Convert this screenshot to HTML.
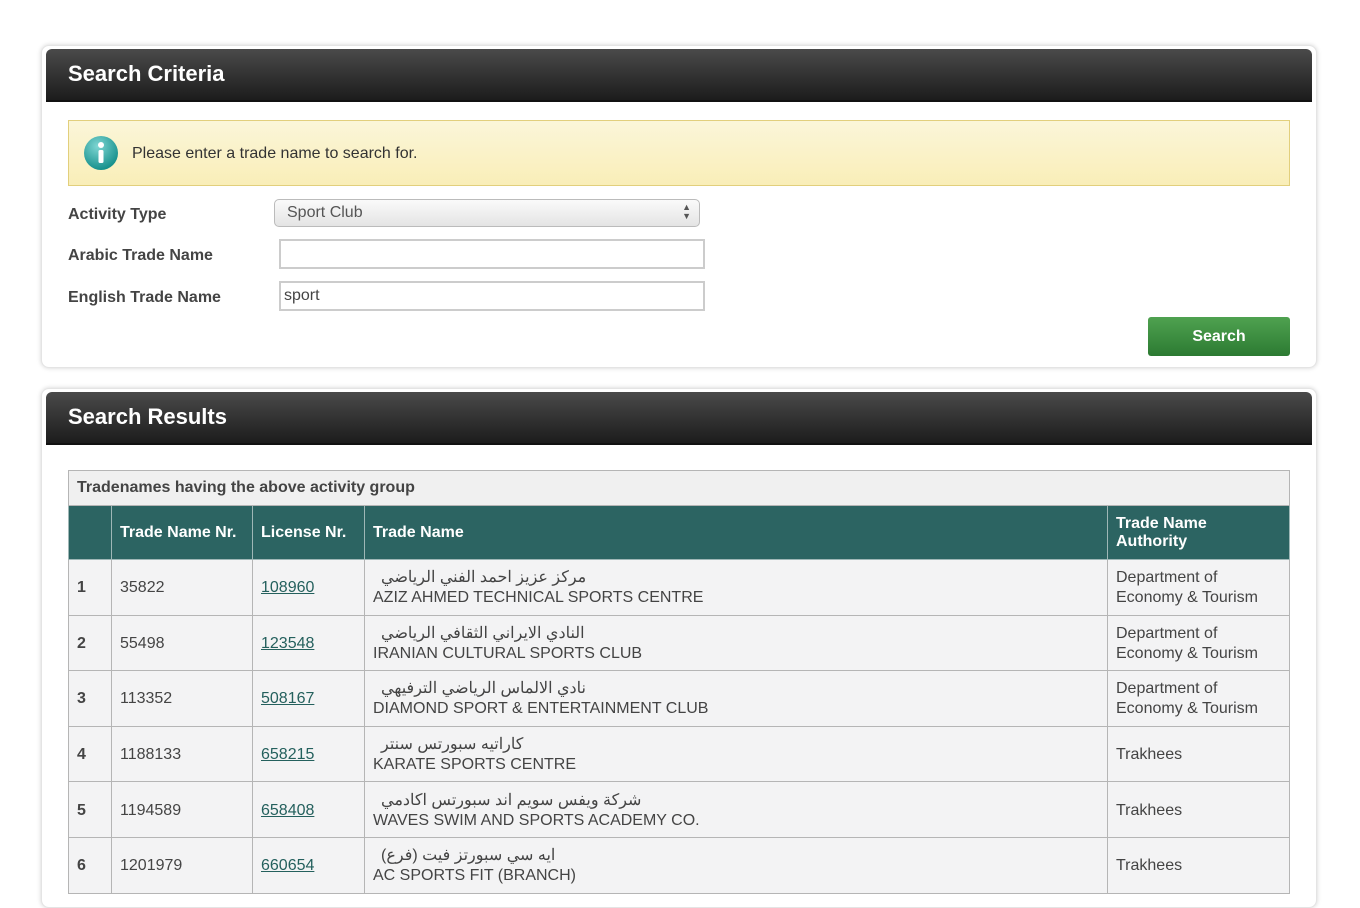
<!DOCTYPE html>
<html><head><meta charset="utf-8"><style>
body{margin:0;background:#fff;font-family:"Liberation Sans",Arial,"Noto Sans CJK SC",sans-serif;width:1360px;height:891px;overflow:hidden;position:relative}
.panel{position:absolute;left:41px;width:1276px;background:#fff;border-radius:8px;box-shadow:0 0 5px rgba(0,0,0,.18);border:1px solid #e4e4e4;box-sizing:border-box}
.hdr{position:absolute;left:4px;right:4px;top:3px;height:53px;background:linear-gradient(#4a4a4a,#1c1c1c);border-radius:6px 6px 0 0;color:#fff;font-weight:bold;font-size:22px;line-height:50px;padding-left:22px;box-sizing:border-box;border-bottom:2px solid #111}
.info{position:absolute;left:68px;top:120px;width:1222px;height:66px;background:linear-gradient(#fbf6d9,#f9eeb8);border:1px solid #e2cf7c;box-sizing:border-box}
.lbl{position:absolute;left:68px;font-weight:bold;color:#444;font-size:16px}
.inp{position:absolute;left:279px;width:426px;height:30px;border:2px solid #ccc;box-sizing:border-box;background:#fff;font-size:16px;color:#444;padding:4px 3px}
table{position:absolute;left:68px;top:470px;width:1222px;border-collapse:collapse;font-size:16px;color:#444}
td,th{border:1px solid #b5b5b5;padding:0 8px;text-align:left;vertical-align:middle}
.cap td{background:#f0f0f0;font-weight:bold;height:34px;font-size:16px}
th{background:#2c6462;color:#fff;height:53px;font-size:16px;border-color:#9fb7b6}
tbody tr.r td{background:#f3f3f4;height:52.6px;line-height:20px;padding-top:2px}
a{color:#24605d;text-decoration:underline}
</style></head><body>
<div class="panel" style="top:45px;height:323px">
<div class="hdr">Search Criteria</div>
</div>
<div class="info">
<svg style="position:absolute;left:14px;top:14px" width="36" height="36" viewBox="0 0 36 36"><defs><radialGradient id="g" cx="40%" cy="30%" r="70%"><stop offset="0" stop-color="#7fd6d3"/><stop offset="1" stop-color="#16908c"/></radialGradient></defs><circle cx="18" cy="18" r="17" fill="url(#g)"/><circle cx="18" cy="10" r="3" fill="#fff"/><rect x="15.5" y="15" width="5" height="13" rx="1.5" fill="#fff"/></svg>
<div style="position:absolute;left:63px;top:24px;font-size:16px;color:#333">Please enter a trade name to search for.</div>
</div>
<div class="lbl" style="top:206px">Activity Type</div>
<div class="lbl" style="top:247px">Arabic Trade Name</div>
<div class="lbl" style="top:289px">English Trade Name</div>
<div style="position:absolute;left:274px;top:199px;width:426px;height:28px;border:1px solid #bbb;border-radius:5px;background:linear-gradient(#fafafa,#e4e4e4);box-sizing:border-box;font-size:16px;color:#555;padding:4px 12px">Sport Club<span style="position:absolute;right:8px;top:3px;font-size:9px;line-height:9px;color:#555">▲<br>▼</span></div>
<div class="inp" style="top:239px"></div>
<div class="inp" style="top:281px">sport</div>
<div style="position:absolute;left:1148px;top:317px;width:142px;height:39px;border-radius:3px;background:linear-gradient(#4fa250,#2c7a32);color:#fff;font-weight:bold;font-size:16px;text-align:center;line-height:39px">Search</div>
<div class="panel" style="top:388px;height:520px">
<div class="hdr">Search Results</div>
</div>
<table>
<tr class="cap"><td colspan="5">Tradenames having the above activity group</td></tr>
<tr><th style="width:26px"></th><th style="width:124px">Trade Name Nr.</th><th style="width:95px">License Nr.</th><th>Trade Name</th><th style="width:165px">Trade Name<br>Authority</th></tr>
<tr class="r"><td><b>1</b></td><td>35822</td><td><a>108960</a></td><td><span dir="rtl" style="padding-left:8px">مركز عزيز احمد الفني الرياضي</span><br>AZIZ AHMED TECHNICAL SPORTS CENTRE</td><td>Department of<br>Economy &amp; Tourism</td></tr>
<tr class="r"><td><b>2</b></td><td>55498</td><td><a>123548</a></td><td><span dir="rtl" style="padding-left:8px">النادي الايراني الثقافي الرياضي</span><br>IRANIAN CULTURAL SPORTS CLUB</td><td>Department of<br>Economy &amp; Tourism</td></tr>
<tr class="r"><td><b>3</b></td><td>113352</td><td><a>508167</a></td><td><span dir="rtl" style="padding-left:8px">نادي الالماس الرياضي الترفيهي</span><br>DIAMOND SPORT &amp; ENTERTAINMENT CLUB</td><td>Department of<br>Economy &amp; Tourism</td></tr>
<tr class="r"><td><b>4</b></td><td>1188133</td><td><a>658215</a></td><td><span dir="rtl" style="padding-left:8px">كاراتيه سبورتس سنتر</span><br>KARATE SPORTS CENTRE</td><td>Trakhees</td></tr>
<tr class="r"><td><b>5</b></td><td>1194589</td><td><a>658408</a></td><td><span dir="rtl" style="padding-left:8px">شركة ويفس سويم اند سبورتس اكادمي</span><br>WAVES SWIM AND SPORTS ACADEMY CO.</td><td>Trakhees</td></tr>
<tr class="r"><td><b>6</b></td><td>1201979</td><td><a>660654</a></td><td><span dir="rtl" style="padding-left:8px">ايه سي سبورتز فيت (فرع)</span><br>AC SPORTS FIT (BRANCH)</td><td>Trakhees</td></tr>
</table>
</body></html>
